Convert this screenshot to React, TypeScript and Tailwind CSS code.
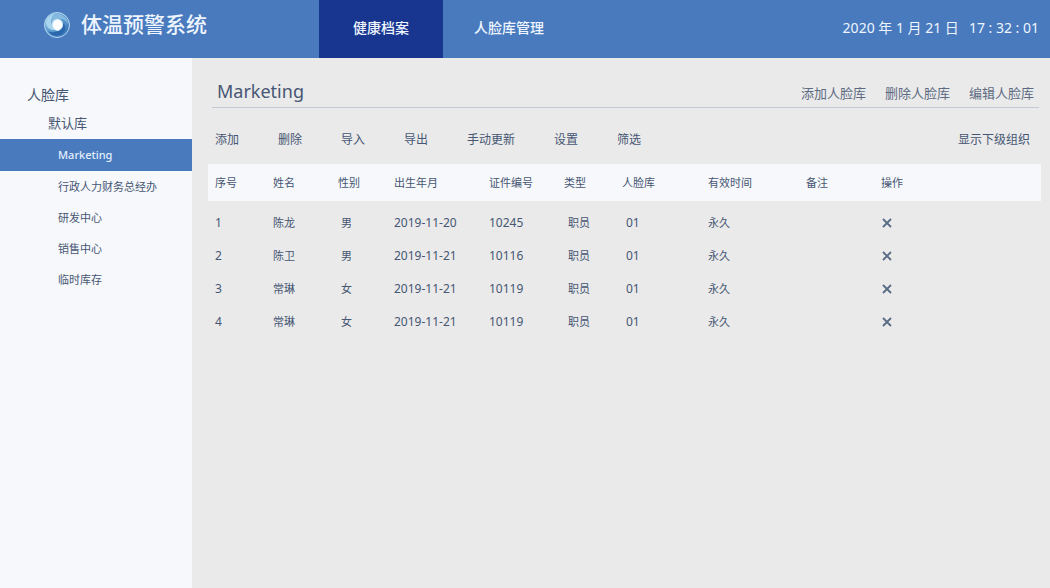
import React from "react";

type Person = {
  id: number;
  name: string;
  gender: string;
  birth: string;
  code: string;
  type: string;
  library: string;
  valid: string;
};

const people: Person[] = [
  { id: 1, name: "陈龙", gender: "男", birth: "2019-11-20", code: "10245", type: "职员", library: "01", valid: "永久" },
  { id: 2, name: "陈卫", gender: "男", birth: "2019-11-21", code: "10116", type: "职员", library: "01", valid: "永久" },
  { id: 3, name: "常琳", gender: "女", birth: "2019-11-21", code: "10119", type: "职员", library: "01", valid: "永久" },
  { id: 4, name: "常琳", gender: "女", birth: "2019-11-21", code: "10119", type: "职员", library: "01", valid: "永久" },
];

const departments = ["行政人力财务总经办", "研发中心", "销售中心", "临时库存"];
const libraryActions = ["添加人脸库", "删除人脸库", "编辑人脸库"];
const tools = ["添加", "删除", "导入", "导出", "手动更新", "设置", "筛选"];

const columns = [
  { label: "序号", width: "w-[58px]" },
  { label: "姓名", width: "w-[65px]" },
  { label: "性别", width: "w-[56px]" },
  { label: "出生年月", width: "w-[95px]" },
  { label: "证件编号", width: "w-[75px]" },
  { label: "类型", width: "w-[58px]" },
  { label: "人脸库", width: "w-[86px]" },
  { label: "有效时间", width: "w-[98px]" },
  { label: "备注", width: "w-[75px]" },
  { label: "操作", width: "" },
];

function Logo() {
  return (
    <svg viewBox="0 0 28 28" className="size-7" aria-hidden="true">
      <defs>
        <linearGradient id="ring" x1="0" y1="0" x2="1" y2="1">
          <stop offset="0" stopColor="#8fc3e6" />
          <stop offset="0.5" stopColor="#5c9bd0" />
          <stop offset="1" stopColor="#2a68ae" />
        </linearGradient>
        <radialGradient id="core">
          <stop offset="0.65" stopColor="#ffffff" />
          <stop offset="1" stopColor="#d3ebf8" />
        </radialGradient>
      </defs>
      <circle cx="14" cy="14" r="12.5" fill="url(#ring)" stroke="#b9d8f0" strokeWidth="1" />
      <path d="M14 3c6 0 11 4.500 11 10.500-2-4.500-5.500-6.500-10-5.500-3 .6-4.500 2-5.500 4C8.500 7.500 10.500 4.500 14 3z" fill="#86bbe0" />
      <path d="M3 12c0-4.500 4-8.500 9-9-3.500 2.500-4.500 6-3.500 10 .5 3 2 5 5 6C8 20 3.500 17 3 12z" fill="#a9d5ee" />
      <path d="M5 20c3.500 2 8 1.500 11-1 2.500-2 3.500-5 2.500-8 4 2.500 5 6.500 2.500 10C17 26.500 8.500 26 5 20z" fill="#2b67ac" />
      <path d="M14.500 8c3.400 0 5.500 2.500 5.500 5.700 0 3.500-2.700 5.300-5.200 6.300-3-.8-5.800-3-5.800-6.500 0-3.200 2.500-5.500 5.500-5.500z" fill="url(#core)" />
    </svg>
  );
}

function CrossIcon() {
  return (
    <svg viewBox="0 0 10 10" className="size-[10px]" aria-hidden="true">
      <path d="M1 1l8 8M9 1L1 9" stroke="#5a6b85" strokeWidth="1.8" fill="none" />
    </svg>
  );
}

export default function App() {
  return (
    <div className="flex min-h-screen flex-col bg-[#eaeaea] font-['Noto_Sans','Noto_Sans_CJK_SC',sans-serif] text-[#465673]">
      <header className="flex h-[58px] items-stretch bg-[#487abd] text-[#eef5ff]">
        <div className="flex w-[319px] items-center gap-[10px] pb-2 pl-[43px]">
          <Logo />
          <h1 className="pb-[2px] text-[21px] leading-7 font-medium">体温预警系统</h1>
        </div>
        <nav className="flex text-sm font-medium">
          <a href="#records" aria-current="page" className="flex items-center bg-[#18368f] px-[34px] pb-[2px]">
            健康档案
          </a>
          <a href="#libraries" className="flex items-center px-[31px] pb-[2px]">
            人脸库管理
          </a>
        </nav>
        <div className="ml-auto flex items-center gap-[10px] pr-[11px] pb-[2px] text-sm">
          <span>2020 年 1 月 21 日</span>
          <span>17 : 32 : 01</span>
        </div>
      </header>

      <div className="flex flex-1">
        <aside className="w-48 shrink-0 bg-[#f6f8fb] pt-[26px]">
          <a href="#all" className="flex h-6 items-center pb-[2px] pl-[27px] text-sm">
            人脸库
          </a>
          <a href="#default" className="flex h-[31px] items-center pl-12 text-[13px]">
            默认库
          </a>
          <a
            href="#marketing"
            aria-current="true"
            className="flex h-8 items-center bg-[#487abd] pl-[58px] text-[11px] font-medium text-[#e3eefc]"
          >
            Marketing
          </a>
          {departments.map((name) => (
            <a key={name} href={"#" + name} className="flex h-[31px] items-center pt-[2px] pl-[58px] text-[11px]">
              {name}
            </a>
          ))}
        </aside>

        <main className="min-w-0 flex-1 pt-[18px] pr-[9px] pl-4">
          <div className="mr-[2px] ml-1 flex h-8 items-center justify-between border-b border-[#c3cad6] pr-[5px] pl-[5px]">
            <h2 className="pb-[2px] text-lg leading-8">Marketing</h2>
            <div className="flex gap-[19px] pt-1 text-[13px] text-[#5d6a82]">
              {libraryActions.map((label) => (
                <button key={label} type="button">
                  {label}
                </button>
              ))}
            </div>
          </div>

          <div className="flex h-14 items-center gap-[39px] pt-2 pr-[11px] pl-[7px] text-xs">
            {tools.map((label) => (
              <button key={label} type="button">
                {label}
              </button>
            ))}
            <button type="button" className="ml-auto">
              显示下级组织
            </button>
          </div>

          <table className="w-full table-fixed text-left text-[11px] leading-4">
            <thead className="bg-[#f6f8fb]">
              <tr className="h-[37px]">
                {columns.map((column) => (
                  <th key={column.label} scope="col" className={"pl-[7px] font-normal " + column.width}>
                    {column.label}
                  </th>
                ))}
              </tr>
            </thead>
            <tbody className="before:block before:h-[5px] before:content-['']">
              {people.map((person) => (
                <tr key={person.id} className="h-[33px]">
                  <td className="pl-[7px] text-xs">{person.id}</td>
                  <td className="pl-[7px]">{person.name}</td>
                  <td className="pl-[10px]">{person.gender}</td>
                  <td className="pl-[7px] text-xs">{person.birth}</td>
                  <td className="pl-[7px] text-xs">{person.code}</td>
                  <td className="pl-[11px]">{person.type}</td>
                  <td className="pl-[11px] text-xs">{person.library}</td>
                  <td className="pl-[7px]">{person.valid}</td>
                  <td />
                  <td className="pl-2">
                    <button type="button" aria-label={"删除 " + person.name} className="flex">
                      <CrossIcon />
                    </button>
                  </td>
                </tr>
              ))}
            </tbody>
          </table>
        </main>
      </div>
    </div>
  );
}
